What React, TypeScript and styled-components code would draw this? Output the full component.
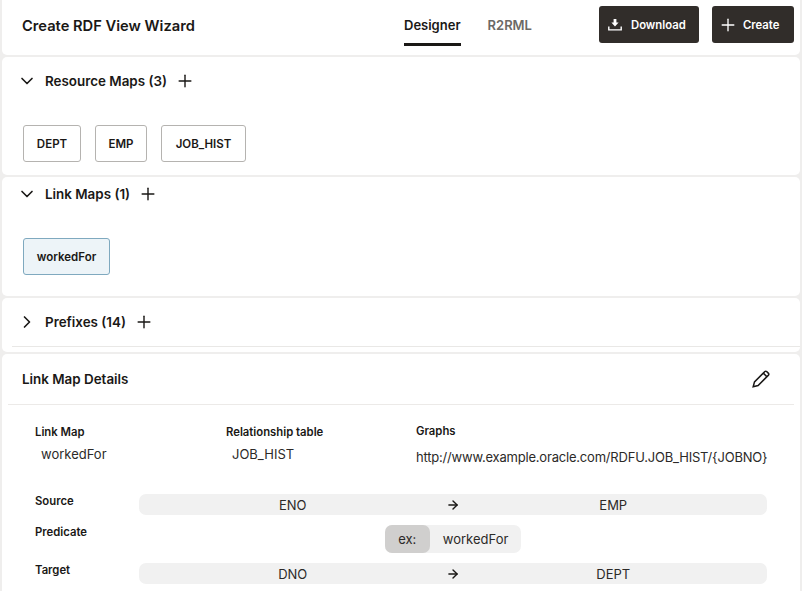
import React from 'react';
import styled, { createGlobalStyle } from 'styled-components';
import { ArrowRight, ChevronDown, ChevronRight, Plus } from 'lucide-react';

const GlobalStyle = createGlobalStyle`
  html, body {
    margin: 0;
    height: 591px;
    overflow: hidden;
    background: #efeeed;
    font-family: Inter, "Liberation Sans", sans-serif;
    color: #1a1816;
  }
  * { box-sizing: border-box; }
`;

function TrayDownloadIcon() {
  return (
    <svg width="14" height="12" viewBox="0 0 14 12" fill="none">
      <path d="M5.6 0h2.8v3.6h2.2L7 7.4 3.4 3.6h2.2z" fill="#fff" />
      <path d="M.8 7.4v3.5h12.4V7.4" stroke="#fff" strokeWidth="1.4" />
    </svg>
  );
}

function PencilIcon() {
  return (
    <svg width="18" height="18" viewBox="0 0 18 18" fill="none" stroke="#1a1816" strokeWidth="1.5">
      <path d="M1.2 16.8l1.3-4.9L12.9 1.5a1.2 1.2 0 0 1 1.7 0l1.9 1.9a1.2 1.2 0 0 1 0 1.7L6.1 15.5z" />
      <path d="M11.3 3.1l3.6 3.6" />
    </svg>
  );
}

function SectionHeading({ title, open }: { title: string; open: boolean }) {
  return (
    <>
      <Toggle>{open ? <ChevronDown size={20} strokeWidth={2} /> : <ChevronRight size={20} strokeWidth={2} />}</Toggle>
      <SectionTitle>{title}</SectionTitle>
      <Plus size={20} strokeWidth={1.7} />
    </>
  );
}

export default function App() {
  return (
    <Page>
      <GlobalStyle />
      <HeaderCard>
        <Title>Create RDF View Wizard</Title>
        <Tabs>
          <Tab $active>Designer</Tab>
          <Tab>R2RML</Tab>
        </Tabs>
        <DarkButton $width={100} $pad={9} $gap={9}>
          <TrayDownloadIcon />
          Download
        </DarkButton>
        <DarkButton $width={82} $pad={6} $gap={5}>
          <Plus size={20} strokeWidth={1.6} />
          Create
        </DarkButton>
      </HeaderCard>

      <SectionCard $height={118}>
        <SectionHeader $top={11}>
          <SectionHeading title="Resource Maps (3)" open />
        </SectionHeader>
        <Chips $top={32}>
          {resourceMaps.map((name) => (
            <Chip key={name.label} $width={name.width}>
              {name.label}
            </Chip>
          ))}
        </Chips>
      </SectionCard>

      <SectionCard $height={119}>
        <SectionHeader $top={4}>
          <SectionHeading title="Link Maps (1)" open />
        </SectionHeader>
        <Chips $top={32}>
          <Chip $width={87} $selected>
            workedFor
          </Chip>
        </Chips>
      </SectionCard>

      <SectionCard $height={54}>
        <SectionHeader $top={11}>
          <SectionHeading title="Prefixes (14)" open={false} />
        </SectionHeader>
        <PrefixRule />
      </SectionCard>

      <DetailsCard>
        <DetailsHeader>
          <DetailsTitle>Link Map Details</DetailsTitle>
          <PencilIcon />
        </DetailsHeader>
        <Meta>
          <MetaItem>
            <Label>Link Map</Label>
            <MetaValue>workedFor</MetaValue>
          </MetaItem>
          <MetaItem>
            <Label>Relationship table</Label>
            <MetaValue>JOB_HIST</MetaValue>
          </MetaItem>
          <GraphItem>
            <Label>Graphs</Label>
            <GraphValue>http://www.example.oracle.com/RDFU.JOB_HIST/{'{JOBNO}'}</GraphValue>
          </GraphItem>
        </Meta>
        <Mapping>
          <Label>Source</Label>
          <MappingBar>
            <span>ENO</span>
            <ArrowRight size={14} strokeWidth={2.4} color="#1a1816" />
            <span>EMP</span>
          </MappingBar>
          <Label>Predicate</Label>
          <PredicateCell>
            <PredicatePill>
              <PrefixPart>ex:</PrefixPart>
              <NamePart>workedFor</NamePart>
            </PredicatePill>
          </PredicateCell>
          <Label>Target</Label>
          <MappingBar>
            <span>DNO</span>
            <ArrowRight size={14} strokeWidth={2.4} color="#1a1816" />
            <span>DEPT</span>
          </MappingBar>
        </Mapping>
      </DetailsCard>
    </Page>
  );
}

/** Data **/
const resourceMaps = [
  { label: 'DEPT', width: 58 },
  { label: 'EMP', width: 52 },
  { label: 'JOB_HIST', width: 85 },
];

const Page = styled.div`
  display: flex;
  flex-direction: column;
  gap: 2px;
  height: 591px;
  padding: 0 2px;
  overflow: hidden;
`;

const HeaderCard = styled.header`
  display: flex;
  align-items: center;
  flex: none;
  height: 55px;
  padding: 0 6px 6px 20px;
  background: #fff;
  border-radius: 0 0 5px 5px;
`;

const Title = styled.h1`
  margin: 0 209px 0 0;
  width: 173px;
  padding-top: 2px;
  font-size: 14.7px;
  font-weight: 600;
  white-space: nowrap;
`;

const Tabs = styled.nav`
  display: flex;
  gap: 27px;
  margin-right: 67px;
  align-self: flex-start;
`;

const Tab = styled.div<{ $active?: boolean }>`
  display: flex;
  align-items: center;
  height: 46px;
  padding-top: 6px;
  font-size: 13px;
  font-weight: 600;
  white-space: nowrap;
  color: ${(p) => (p.$active ? '#1a1816' : '#6b6966')};
  border-bottom: 3px solid ${(p) => (p.$active ? '#1a1816' : 'transparent')};
`;

const DarkButton = styled.button<{ $width: number; $pad: number; $gap: number }>`
  display: flex;
  align-items: center;
  gap: ${(p) => p.$gap}px;
  flex: none;
  width: ${(p) => p.$width}px;
  height: 37px;
  margin-right: 13px;
  padding: 0 0 0 ${(p) => p.$pad}px;
  border: none;
  border-radius: 3px;
  background: #312d2a;
  color: #fff;
  font-family: inherit;
  font-size: 11.3px;
  font-weight: 600;

  &:last-child {
    margin-right: 0;
  }
`;

const SectionCard = styled.section<{ $height: number }>`
  flex: none;
  height: ${(p) => p.$height}px;
  padding: 0 20px;
  background: #fff;
  border-radius: 5px;
`;

const SectionHeader = styled.div<{ $top: number }>`
  display: flex;
  align-items: center;
  height: 25px;
  margin-top: ${(p) => p.$top}px;
  color: #1a1816;
`;

const Toggle = styled.span`
  display: flex;
  margin-left: -5px;
`;

const SectionTitle = styled.h2`
  margin: 0 8px;
  font-size: 13.4px;
  font-weight: 600;
  white-space: nowrap;
`;

const Chips = styled.div<{ $top: number }>`
  display: flex;
  gap: 14px;
  margin: ${(p) => p.$top}px 0 0 1px;
`;

const Chip = styled.div<{ $width: number; $selected?: boolean }>`
  display: flex;
  align-items: center;
  justify-content: center;
  width: ${(p) => p.$width}px;
  height: 37px;
  font-size: 11.5px;
  font-weight: 600;
  border-radius: 3px;
  border: 1px solid ${(p) => (p.$selected ? '#7fa9bf' : '#b5b3b0')};
  background: ${(p) => (p.$selected ? '#edf4f8' : '#fff')};
`;

const PrefixRule = styled.div`
  margin: 12px -20px 0 -10px;
  height: 1px;
  background: #e9e8e6;
`;

const DetailsCard = styled.section`
  flex: 1;
  min-height: 0;
  padding: 0 6px;
  background: #fff;
  border-radius: 5px 5px 0 0;
`;

const DetailsHeader = styled.div`
  display: flex;
  align-items: center;
  justify-content: space-between;
  height: 51px;
  padding: 0 24px 0 14px;
  border-bottom: 1px solid #eceae8;
`;

const DetailsTitle = styled.h2`
  margin: 0;
  font-size: 13.4px;
  font-weight: 600;
`;

const Meta = styled.div`
  display: grid;
  grid-template-columns: 191px 190px 1fr;
  padding: 20px 0 0 27px;
`;

const MetaItem = styled.div`
  display: flex;
  flex-direction: column;
  min-width: 0;
`;

const GraphItem = styled(MetaItem)`
  margin-top: -1px;
`;

const Label = styled.div`
  font-size: 11.3px;
  font-weight: 600;
  line-height: 14px;
  white-space: nowrap;
`;

const MetaValue = styled.div`
  margin: 7px 0 0 6px;
  font-size: 13px;
  line-height: 16px;
  color: #2c2a28;
`;

const GraphValue = styled.div`
  margin-top: 11px;
  font-size: 13px;
  line-height: 16px;
  letter-spacing: -0.2px;
  white-space: nowrap;
  color: #2c2a28;
`;

const Mapping = styled.div`
  display: grid;
  grid-template-columns: 104px 628px;
  grid-template-rows: 21px 28px 21px;
  row-gap: 10px;
  padding: 29px 0 0 27px;
`;

const MappingBar = styled.div`
  display: grid;
  grid-template-columns: 1fr 13px 1fr;
  align-items: center;
  justify-items: center;
  border-radius: 7px;
  background: #f1f1f1;
  font-size: 13px;
  color: #2c2a28;
`;

const PredicateCell = styled.div`
  display: flex;
  justify-content: center;
`;

const PredicatePill = styled.div`
  display: flex;
  border-radius: 7px;
  background: #f1f1f1;
  font-size: 13px;
  color: #2c2a28;
`;

const PrefixPart = styled.div`
  display: flex;
  align-items: center;
  padding: 0 13.5px;
  border-radius: 7px;
  background: #d0cfce;
`;

const NamePart = styled.div`
  display: flex;
  align-items: center;
  padding: 0 13px;
`;
